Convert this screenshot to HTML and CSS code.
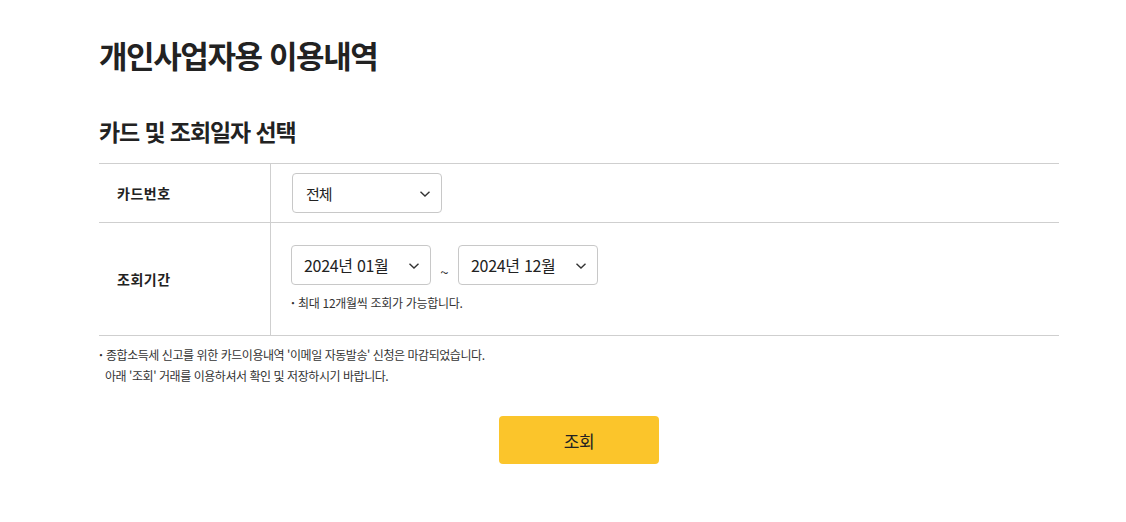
FILE: index.html
```html
<!DOCTYPE html>
<html lang="ko">
<head>
<meta charset="utf-8">
<title>개인사업자용 이용내역</title>
<link rel="stylesheet" href="styles.css">
</head>
<body>
<main class="page">
  <h1 class="title">개인사업자용 이용내역</h1>
  <h2 class="subtitle">카드 및 조회일자 선택</h2>
  <div class="table">
    <div class="row row-card">
      <div class="label">카드번호</div>
      <div class="cell">
        <div class="select select-card">
          <span>전체</span>
          <svg class="chev" width="12" height="8" viewBox="0 0 12 8"><path d="M1.5 1.8 L6 6 L10.5 1.8" fill="none" stroke="#333" stroke-width="1.4"/></svg>
        </div>
      </div>
    </div>
    <div class="row row-period">
      <div class="label">조회기간</div>
      <div class="cell cell-period">
        <div class="dates">
          <div class="select select-date">
            <span>2024년 01월</span>
            <svg class="chev" width="12" height="8" viewBox="0 0 12 8"><path d="M1.5 1.8 L6 6 L10.5 1.8" fill="none" stroke="#333" stroke-width="1.4"/></svg>
          </div>
          <span class="tilde">~</span>
          <div class="select select-date">
            <span>2024년 12월</span>
            <svg class="chev" width="12" height="8" viewBox="0 0 12 8"><path d="M1.5 1.8 L6 6 L10.5 1.8" fill="none" stroke="#333" stroke-width="1.4"/></svg>
          </div>
        </div>
        <p class="note"><span class="dot">·</span>최대 12개월씩 조회가 가능합니다.</p>
      </div>
    </div>
  </div>
  <div class="notice">
    <p><span class="dot">·</span>종합소득세 신고를 위한 카드이용내역 '이메일 자동발송' 신청은 마감되었습니다.</p>
    <p class="indent">아래 '조회' 거래를 이용하셔서 확인 및 저장하시기 바랍니다.</p>
  </div>
  <div class="actions">
    <button class="btn">조회</button>
  </div>
</main>
</body>
</html>
```

FILE: styles.css
```css
* { box-sizing: border-box; }
html, body { margin: 0; padding: 0; background: #fff; }
body {
  font-family: "Noto Sans CJK KR", "Noto Sans", sans-serif;
  color: #222;
}
.page {
  width: 960px;
  margin-left: 99px;
  padding-top: 33px;
}
.title {
  margin: 0;
  font-size: 31px;
  line-height: 44px;
  font-weight: 700;
  letter-spacing: -1.4px;
}
.subtitle {
  margin: 37px 0 0;
  font-size: 23px;
  line-height: 34px;
  font-weight: 700;
  letter-spacing: -1.1px;
}
.table {
  margin-top: 15px;
  border-top: 1px solid #cfcfcf;
}
.row {
  display: flex;
  border-bottom: 1px solid #cfcfcf;
}
.label {
  width: 172px;
  flex: none;
  padding-left: 18px;
  display: flex;
  align-items: center;
  font-size: 14px;
  font-weight: 700;
  letter-spacing: 0.5px;
  border-right: 1px solid #cfcfcf;
}
.cell { flex: 1; }
.row-card { height: 59px; }
.row-card .cell { padding: 9px 0 0 21px; }
.row-period { height: 113px; }
.cell-period { padding: 22px 0 0 20px; }
.select {
  height: 40px;
  border: 1px solid #c8c8c8;
  border-radius: 4px;
  display: flex;
  align-items: center;
  justify-content: space-between;
  padding: 0 10px 0 13px;
  font-size: 15px;
  letter-spacing: -1px;
  background: #fff;
}
.select-card { width: 150px; }
.select-date { width: 140px; padding-left: 12px; font-size: 16px; letter-spacing: -0.3px; }
.chev { display: block; margin-top: 1px; }
.dates {
  display: flex;
  align-items: center;
}
.tilde {
  width: 27px;
  text-align: center;
  font-size: 15px;
  padding-top: 13px;
  color: #333;
}
.note {
  margin: 8px 0 0;
  font-size: 12px;
  line-height: 20px;
  letter-spacing: -0.3px;
  color: #333;
}
.dot { display: inline-block; width: 7px; font-weight: 700; }
.notice {
  margin-top: 8px;
  font-size: 12px;
  line-height: 21px;
  letter-spacing: -0.45px;
  color: #333;
}
.notice p { margin: 0; }
.notice .indent { padding-left: 6px; }
.actions {
  display: flex;
  justify-content: center;
  margin-top: 30px;
}
.btn {
  width: 160px;
  height: 48px;
  border: 0;
  border-radius: 4px;
  background: #fbc52b;
  color: #222;
  font-family: "Noto Sans CJK KR", sans-serif;
  font-size: 17px;
  letter-spacing: -0.5px;
  padding: 0;
}
```
